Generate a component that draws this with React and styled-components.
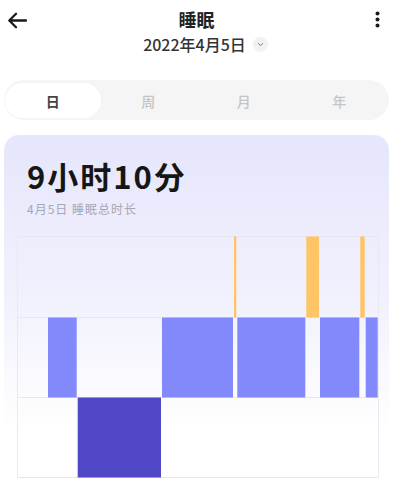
import React from "react";
import styled, { createGlobalStyle } from "styled-components";

const Global = createGlobalStyle`
  html, body { margin: 0; padding: 0; background: #fff; }
  body { font-family: "Noto Sans CJK SC", "Noto Sans", sans-serif; }
  * { box-sizing: border-box; }
`;

const Page = styled.div`
  width: 403px;
  height: 489px;
  overflow: hidden;
  background: #fff;
`;

const Header = styled.div`
  display: grid;
  grid-template-columns: 40px 1fr 40px;
  align-items: start;
  height: 68px;
  padding-top: 7px;
`;

const IconButton = styled.div`
  display: flex;
  justify-content: ${(p) => (p.$end ? "flex-end" : "flex-start")};
  padding: ${(p) => (p.$end ? "4px 23px 0 0" : "5px 0 0 7px")};
  height: 28px;
`;

const TitleCol = styled.div`
  display: flex;
  flex-direction: column;
  align-items: center;
`;

const Title = styled.div`
  font-size: 18px;
  line-height: 24px;
  font-weight: 700;
  color: #222;
  margin-right: 10px;
`;

const DateRow = styled.div`
  display: flex;
  align-items: center;
  gap: 7px;
  margin-top: 3px;
  margin-left: 8px;
`;

const DateText = styled.div`
  font-size: 16px;
  line-height: 20px;
  font-weight: 500;
  color: #333;
`;

const Chevron = styled.div`
  width: 15px;
  height: 15px;
  border-radius: 50%;
  background: #f2f2f2;
  display: flex;
  align-items: center;
  justify-content: center;
`;

const Tabs = styled.div`
  margin: 12px 0 0 4px;
  width: 385px;
  height: 40px;
  border-radius: 20px;
  background: #f5f5f5;
  padding: 3px 2px 2px 1px;
  display: grid;
  grid-template-columns: repeat(4, 1fr);
`;

const Tab = styled.div`
  display: flex;
  align-items: center;
  justify-content: center;
  border-radius: 18px;
  font-size: 14px;
  font-weight: ${(p) => (p.$active ? 600 : 500)};
  color: ${(p) => (p.$active ? "#444" : "#c4c4c4")};
  background: ${(p) => (p.$active ? "#fff" : "transparent")};
`;

const Card = styled.div`
  margin: 15px 0 0 4px;
  width: 385px;
  height: 360px;
  border-radius: 15px;
  background: linear-gradient(180deg, #e6e6fc 0%, #f1f1fd 45%, #ffffff 82%);
  padding: 21px 0 0 23px;
`;

const Big = styled.div`
  font-size: 31px;
  line-height: 40px;
  font-weight: 700;
  color: #161616;
  letter-spacing: 2px;
`;

const Sub = styled.div`
  font-size: 12px;
  line-height: 14px;
  color: #a6a6b4;
  margin-top: 6px;
  letter-spacing: 1px;
`;

const ChartWrap = styled.div`
  margin: 20px 0 0 -10px;
`;

const rows = [0, 81, 161, 241];
const bars = [
  { x1: 30, x2: 59.7, r: 1, c: "#8289fb" },
  { x1: 59.7, x2: 144, r: 2, c: "#5148c8" },
  { x1: 144, x2: 216, r: 1, c: "#8289fb" },
  { x1: 216, x2: 219.3, r: 0, c: "#ffc466" },
  { x1: 219.3, x2: 288.3, r: 1, c: "#8289fb" },
  { x1: 288.3, x2: 302, r: 0, c: "#ffc466" },
  { x1: 302, x2: 342.3, r: 1, c: "#8289fb" },
  { x1: 342.3, x2: 347.7, r: 0, c: "#ffc466" },
  { x1: 347.7, x2: 360.7, r: 1, c: "#8289fb" },
];

function Chart() {
  return (
    <svg width="362" height="243" viewBox="-0.5 -0.5 362 243">
      {rows.map((y) => (
        <line key={y} x1={0} x2={361} y1={y} y2={y} stroke="#e6e6f5" strokeWidth="1" />
      ))}
      <line x1={0} x2={0} y1={0} y2={241} stroke="#e9e9f6" />
      <line x1={361} x2={361} y1={0} y2={241} stroke="#e9e9f6" />
      {bars.map((b, i) => (
        <rect
          key={i}
          x={b.x1 + 0.5}
          y={rows[b.r]}
          width={b.x2 - b.x1 - 1}
          height={rows[b.r + 1] - rows[b.r]}
          fill={b.c}
        />
      ))}
    </svg>
  );
}

export default function App() {
  return (
    <Page>
      <Global />
      <Header>
        <IconButton>
          <svg width="20" height="17" viewBox="0 0 20 17">
            <path d="M19 8.5H2.5M9 1.8L2.3 8.5L9 15.2" fill="none" stroke="#1a1a1a" strokeWidth="2.3" strokeLinecap="round" strokeLinejoin="round" />
          </svg>
        </IconButton>
        <TitleCol>
          <Title>睡眠</Title>
          <DateRow>
            <DateText>2022年4月5日</DateText>
            <Chevron>
              <svg width="7" height="5" viewBox="0 0 7 5">
                <path d="M1 1.2L3.5 3.6L6 1.2" fill="none" stroke="#777" strokeWidth="1" />
              </svg>
            </Chevron>
          </DateRow>
        </TitleCol>
        <IconButton $end>
          <svg width="5" height="17" viewBox="0 0 5 17">
            <circle cx="2.5" cy="2.5" r="2" fill="#1a1a1a" />
            <circle cx="2.5" cy="8.5" r="2" fill="#1a1a1a" />
            <circle cx="2.5" cy="14.5" r="2" fill="#1a1a1a" />
          </svg>
        </IconButton>
      </Header>
      <Tabs>
        <Tab $active>日</Tab>
        <Tab>周</Tab>
        <Tab>月</Tab>
        <Tab>年</Tab>
      </Tabs>
      <Card>
        <Big>9小时10分</Big>
        <Sub>4月5日 睡眠总时长</Sub>
        <ChartWrap>
          <Chart />
        </ChartWrap>
      </Card>
    </Page>
  );
}
